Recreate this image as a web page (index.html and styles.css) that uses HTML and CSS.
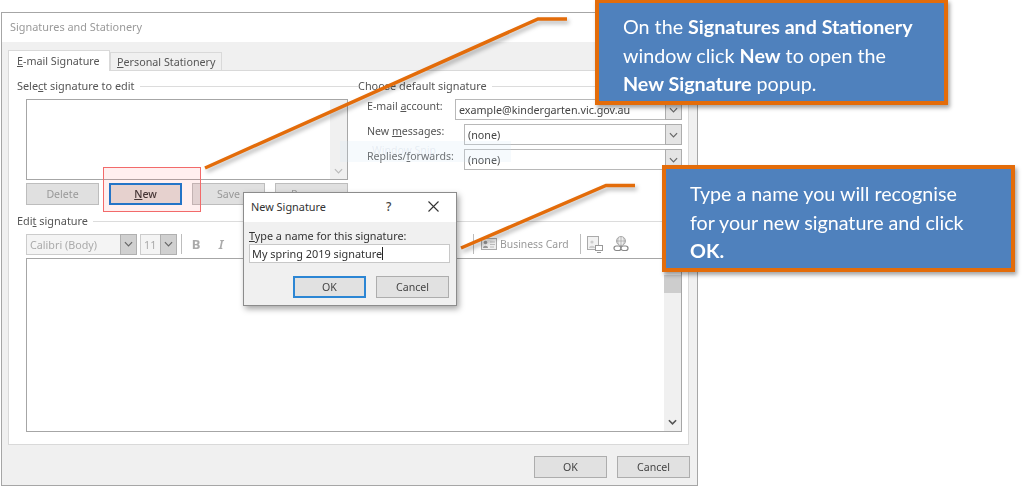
FILE: index.html
```html
<!DOCTYPE html>
<html lang="en">
<head>
<meta charset="utf-8">
<title>Signatures and Stationery</title>
<link rel="stylesheet" href="styles.css">
</head>
<body>
<main class="stage">
  <section class="window">
    <header class="titlebar">Signatures and Stationery</header>
    <div class="window-body">
      <nav class="tabs">
        <div class="tab tab-active"><u>E</u>-mail Signature</div>
        <div class="tab tab-idle"><u>P</u>ersonal Stationery</div>
      </nav>
      <div class="panel">
        <div class="top-row">
          <div class="group group-select">
            <div class="group-head"><span>Sele<u>c</u>t signature to edit</span><i class="rule"></i></div>
            <div class="listbox">
              <div class="scroll-track">
                <svg class="chev chev-faint" viewBox="0 0 10 6"><path d="M1 1l4 4 4-4"/></svg>
              </div>
            </div>
            <div class="button-row">
              <div class="btn btn-off">Delete</div>
              <div class="btn btn-focus"><span><u>N</u>ew</span></div>
              <div class="btn btn-off">Save</div>
              <div class="btn btn-off">Rename</div>
            </div>
          </div>
          <div class="group group-default">
            <div class="group-head"><span>Choose default signature</span><i class="rule"></i></div>
            <div class="form">
              <div class="form-row">
                <span class="form-label">E-mail <u>a</u>ccount:</span>
                <div class="select select-wide"><span>example@kindergarten.vic.gov.au</span><b class="drop"><svg class="chev" viewBox="0 0 10 6"><path d="M1 1l4 4 4-4"/></svg></b></div>
              </div>
              <div class="form-row">
                <span class="form-label">New <u>m</u>essages:</span>
                <div class="select select-narrow"><span>(none)</span><b class="drop"><svg class="chev" viewBox="0 0 10 6"><path d="M1 1l4 4 4-4"/></svg></b></div>
              </div>
              <div class="form-row">
                <span class="form-label">Replies/<u>f</u>orwards:</span>
                <div class="select select-narrow"><span>(none)</span><b class="drop"><svg class="chev" viewBox="0 0 10 6"><path d="M1 1l4 4 4-4"/></svg></b></div>
              </div>
            </div>
          </div>
        </div>
        <div class="group-head group-edit"><span>Edi<u>t</u> signature</span><i class="rule"></i></div>
        <div class="toolbar">
          <div class="select select-font"><span>Calibri (Body)</span><b class="drop"><svg class="chev" viewBox="0 0 10 6"><path d="M1 1l4 4 4-4"/></svg></b></div>
          <div class="select select-size"><span>11</span><b class="drop"><svg class="chev" viewBox="0 0 10 6"><path d="M1 1l4 4 4-4"/></svg></b></div>
          <i class="sep"></i>
          <span class="tool-bold">B</span>
          <span class="tool-italic">I</span>
          <span class="tool-group">
            <i class="sep"></i>
            <svg class="card-icon" viewBox="0 0 16 12"><rect x=".5" y=".5" width="15" height="11" fill="#eee" stroke="#aaa"/><circle cx="4.5" cy="4.5" r="1.8" fill="#999"/><path d="M2 10c0-3 5-3 5 0z" fill="#999"/><path d="M9 4h5M9 6.5h5M9 9h4" stroke="#bbb"/></svg>
            <span class="card-text">Business Card</span>
            <i class="sep sep-card"></i>
            <svg class="img-icon" viewBox="0 0 16 17"><rect x=".5" y=".5" width="11" height="13" fill="#f2f2f2" stroke="#aaa"/><circle cx="5" cy="6" r="1.6" fill="#ccc"/><path d="M2 12c0-3 6-3 6 0z" fill="#ccc"/><rect x="8.5" y="9.5" width="7" height="5" fill="#fff" stroke="#999"/><path d="M10 16.500h4" stroke="#999"/></svg>
            <svg class="link-icon" viewBox="0 0 16 16"><circle cx="8" cy="5" r="4.500" fill="#eee" stroke="#aaa"/><path d="M3.500 5h9M8 .5v9M5.500 1.500c-1 2-1 5 0 7M10.500 1.500c1 2 1 5 0 7" fill="none" stroke="#aaa" stroke-width=".8"/><rect x="1" y="10" width="7" height="4.500" rx="2.200" fill="#fff" stroke="#888" stroke-width="1.200"/><rect x="8" y="10" width="7" height="4.500" rx="2.200" fill="#fff" stroke="#888" stroke-width="1.200"/></svg>
          </span>
        </div>
        <div class="editor">
          <div class="editor-scroll">
            <i class="thumb"></i>
            <svg class="chev chev-dark" viewBox="0 0 10 6"><path d="M1 1l4 4 4-4"/></svg>
          </div>
        </div>
      </div>
      <footer class="window-foot">
        <div class="btn">OK</div>
        <div class="btn">Cancel</div>
      </footer>
    </div>
  </section>

  <div class="ghost-tip">Window Snip</div>
  <div class="highlight"></div>

  <svg class="leaders" viewBox="0 0 1024 488">
    <polyline class="leader" points="205,168 538,19 567,19"/>
    <polyline class="leader" points="461,248 606,185.500 635,185.500"/>
  </svg>

  <section class="popup">
    <header class="popup-title">
      <span class="popup-name">New Signature</span>
      <span class="popup-help">?</span>
      <svg class="popup-close" viewBox="0 0 11 11"><path d="M.5.5l10 10M10.500.5l-10 10"/></svg>
    </header>
    <div class="popup-body">
      <label class="popup-label"><u>T</u>ype a name for this signature:</label>
      <div class="popup-input">My spring 2019 signature<i class="caret"></i></div>
      <div class="popup-buttons">
        <div class="btn btn-default">OK</div>
        <div class="btn">Cancel</div>
      </div>
    </div>
  </section>

  <aside class="callout callout-new">
    <p>On the <strong>Signatures and Stationery</strong><br>window click <strong>New</strong> to open the<br><strong>New Signature</strong> popup.</p>
  </aside>
  <aside class="callout callout-name">
    <p>Type a name you will recognise<br>for your new signature and click<br><strong>OK.</strong></p>
  </aside>
</main>
</body>
</html>
```
FILE: styles.css
```css
* { box-sizing: border-box; }
html, body { margin: 0; padding: 0; background: #fff; }
body { width: 1024px; height: 488px; overflow: hidden; font-family: "Noto Sans", "Open Sans", sans-serif; font-size: 10.6px; color: #555; }
.stage { position: relative; width: 1024px; height: 488px; overflow: hidden; }

.window { position: absolute; left: 1px; top: 12px; width: 697px; height: 474px; border: 1px solid #a6a6a6; background: #f0f0f0; filter: blur(.35px); }
.titlebar { height: 29px; padding: 7px 0 0 8px; background: #fff; color: #9a9a9a; font-size: 10.900px; line-height: 14px; }
.window-body { padding: 8px 8px 0 6px; }

.tabs { display: flex; align-items: flex-end; height: 20px; }
.tab { border: 1px solid #d9d9d9; border-bottom: 0; line-height: 14px; font-size: 10.750px; }
.tab-active { position: relative; z-index: 1; width: 102px; height: 21px; margin-bottom: -1px; padding: 3px 0 0 8px; background: #fff; }
.tab-idle { width: 112px; height: 18px; padding: 2px 0 0 6px; margin-left: 0; background: #f0f0f0; }

.panel { height: 375px; border: 1px solid #d9d9d9; background: #fff; padding-top: 8px; }
.top-row { display: grid; grid-template-columns: 349px 1fr; }
.group-head { display: flex; align-items: center; gap: 5px; height: 14px; line-height: 14px; white-space: nowrap; font-size: 10.900px; }
.rule { flex: 1; height: 1px; background: #dcdcdc; }
.group-select { padding-left: 8px; }
.group-default .group-head { margin-right: 8px; }

.listbox { display: flex; justify-content: flex-end; width: 322px; height: 81px; margin: 6px 0 0 9px; border: 1px solid #a6a6a6; background: #fff; }
.scroll-track { position: relative; display: flex; align-items: flex-end; justify-content: center; width: 17px; padding-bottom: 5px; background: #f0f0f0; }
.button-row { display: flex; gap: 10px; margin: 3px 0 0 9px; }

.btn { display: flex; align-items: center; justify-content: center; width: 73px; height: 22px; border: 1px solid #adadad; background: #e1e1e1; color: #444; line-height: 14px; }
.btn-off { color: #999; border-color: #bdbdbd; background: #e0e0e0; }
.btn-focus { border: 2px solid #0f78d4; background: #e4dedb; color: #333; font-weight: 500; }
.btn-default { border: 2px solid #2c86d4; }

.form { display: flex; flex-direction: column; gap: 4px; margin-top: 6px; padding: 0 6px 0 9px; }
.form-row { display: flex; justify-content: space-between; height: 21px; }
.form-label { line-height: 14px; }
.select { display: flex; align-items: center; justify-content: space-between; height: 21px; border: 1px solid #b8b8b8; background: #fff; color: #444; }
.select > span { padding: 1px 0 0 3px; white-space: nowrap; font-size: 10.750px; }
.select-wide { width: 227px; }
.select-narrow { width: 218px; }
.drop { display: flex; align-items: center; justify-content: center; align-self: stretch; width: 17px; border: 1px solid #adadad; margin: -1px; background: #e4e4e4; }
.chev { display: block; width: 9px; height: 6px; fill: none; stroke: #666; stroke-width: 1.300; }
.chev-faint { stroke: #bbb; }
.chev-dark { stroke: #555; stroke-width: 1.800; }

.group-edit { margin: 9px 8px 0 8px; }
.toolbar { display: flex; align-items: center; height: 20px; margin: 6px 0 0 17px; color: #aaa; }
.select-font { width: 111px; background: #f4f4f4; border-color: #ccc; color: #aaa; }
.select-size { width: 37px; margin-left: 3px; background: #f4f4f4; border-color: #ccc; color: #aaa; }
.select-font .drop, .select-size .drop { background: #d0d0d0; border-color: #b0b0b0; }
.sep { width: 1px; height: 20px; margin-left: 4px; background: #bdbdbd; }
.tool-bold { width: 14px; margin-left: 7px; text-align: center; font-size: 13px; font-weight: 700; }
.tool-italic { width: 12px; margin-left: 12px; text-align: center; font-size: 13px; font-style: italic; font-weight: 600; }
.tool-group { display: flex; align-items: center; margin-left: 242px; }
.card-icon { width: 16px; height: 12px; margin-left: 7px; }
.card-text { width: 69px; margin-left: 3px; color: #999; white-space: nowrap; font-size: 10.400px; line-height: 13px; padding-top: 1px; }
.sep-card { margin-left: 11px; }
.img-icon { width: 16px; height: 17px; margin-left: 6px; }
.link-icon { width: 16px; height: 16px; margin-left: 10px; }

.editor { display: flex; justify-content: flex-end; width: 656px; height: 174px; margin: 4px 0 0 17px; border: 1px solid #a6a6a6; background: #fff; }
.editor-scroll { display: flex; flex-direction: column; justify-content: space-between; align-items: center; width: 17px; padding: 16px 0 6px; background: #f0f0f0; }
.thumb { width: 17px; height: 18px; background: #cdcdcd; }

.window-foot { display: flex; justify-content: flex-end; gap: 10px; padding: 11px 0 0 0; margin-right: -1px; }

.ghost-tip { position: absolute; left: 340px; top: 141px; width: 171px; height: 21px; padding: 2px 0 0 32px; background: rgba(210,228,245,.2); color: rgba(120,140,170,.14); font-size: 10.500px; }
.highlight { position: absolute; left: 103px; top: 167px; width: 98px; height: 45px; border: 1px solid #f26a6a; background: rgba(255,80,80,.09); }

.leaders { position: absolute; left: 0; top: 0; width: 1024px; height: 488px; overflow: visible; }
.leader { fill: none; stroke: #e36c0a; stroke-width: 3.500; filter: drop-shadow(2px 3px 2px rgba(0,0,0,.3)); }

.popup { position: absolute; left: 243px; top: 192px; width: 214px; height: 114px; border: 1px solid #8c8c8c; background: #f0f0f0; box-shadow: 2px 3px 6px rgba(0,0,0,.35); color: #333; filter: blur(.3px); }
.popup-title { display: flex; align-items: center; height: 29px; padding-bottom: 2px; background: #fff; }
.popup-name { width: 76px; margin-left: 7px; color: #333; font-size: 10.900px; white-space: nowrap; }
.popup-help { margin-left: 59px; font-size: 12px; font-weight: 500; color: #444; }
.popup-close { width: 11px; height: 11px; margin-left: 37px; fill: none; stroke: #333; stroke-width: 1.100; }
.popup-body { padding: 7px 6px 0 5px; }
.popup-label { display: block; line-height: 14px; color: #333; font-size: 10.800px; }
.popup-input { display: flex; align-items: center; width: 201px; height: 19px; margin-top: 1px; padding-left: 2px; border: 1px solid #c8c8c8; background: #fff; color: #333; white-space: nowrap; font-size: 10.900px; }
.caret { width: 1px; height: 13px; background: #222; }
.popup-buttons { display: flex; justify-content: flex-end; gap: 10px; margin: 13px 1px 0 0; }

.callout { position: absolute; width: 353px; background: #4f81bd; border: 4px solid #e36c0a; box-shadow: 2px 3px 4px rgba(0,0,0,.35); color: #fff; font-family: "Lato", "Open Sans", sans-serif; font-size: 19.700px; line-height: 28.500px; filter: blur(.25px); }
.callout p { margin: 0; }
.callout strong { font-weight: 700; }
.callout-new { left: 595px; top: -1px; height: 106px; padding: 10px 0 0 24px; }
.callout-name { left: 662px; top: 165px; height: 107px; padding: 11px 0 0 24px; }
```
